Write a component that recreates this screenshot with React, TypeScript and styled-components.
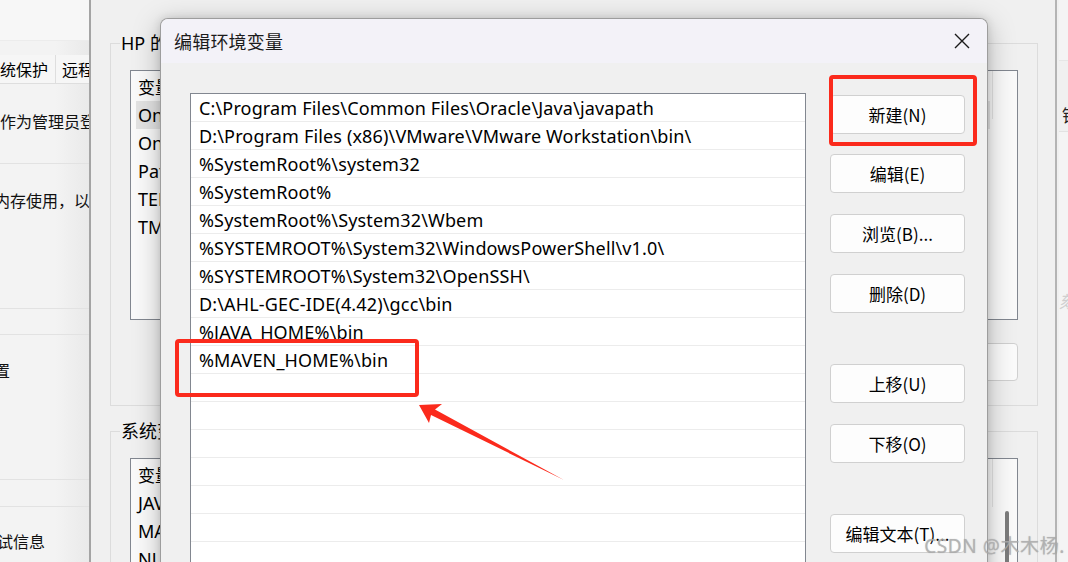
import React from "react";
import styled, { createGlobalStyle } from "styled-components";

const Global = createGlobalStyle`
  html, body { margin: 0; padding: 0; }
  body {
    width: 1068px; height: 562px; overflow: hidden;
    background: #f0f0f0;
    font-family: "Noto Sans", "Noto Sans CJK SC", sans-serif;
    color: #000;
  }
  #root { width: 1068px; height: 562px; }
`;

const Desktop = styled.div`
  position: relative;
  width: 1068px;
  height: 562px;
  overflow: hidden;
  background: #f0f0f0;
`;

/* ---------- left background window ---------- */
const LeftWindow = styled.div`
  position: absolute;
  left: -24px;
  top: 0;
  width: 114px;
  height: 562px;
  display: flex;
  flex-direction: column;
  background: linear-gradient(to right, #f3f3f3 70%, #e9e9e9 100%);
  font-family: "Noto Sans CJK SC", sans-serif;
  font-size: 16px;
  overflow: hidden;
`;

const TopStrip = styled.div`
  flex: none;
  height: 40px;
  background: #f7f7f7;
  border-bottom: 1px solid #ececec;
`;

const TabRow = styled.div`
  flex: none;
  margin-top: 14px;
  height: 28px;
  display: flex;
  border-bottom: 1px solid #dedede;
  background: #f6f6f6;
`;

const Tab = styled.div<{ $pl: number; $pr: number }>`
  padding: 0 ${(p) => p.$pr}px 0 ${(p) => p.$pl}px;
  line-height: 28px;
  white-space: nowrap;
  border-right: 1px solid #dedede;
`;

const LeftBlock = styled.div<{ $h: number; $pt: number }>`
  flex: none;
  height: ${(p) => p.$h}px;
  box-sizing: border-box;
  padding-top: ${(p) => p.$pt}px;
  border-bottom: 1px solid #e2e2e2;
  white-space: nowrap;
  line-height: 22px;
`;

const LeftText = styled.div<{ $shift: number }>`
  margin-left: ${(p) => p.$shift}px;
  color: #111;
`;

/* ---------- middle background window ---------- */
const MidWindow = styled.div`
  position: absolute;
  left: 89px;
  top: 0;
  width: 968px;
  height: 600px;
  box-sizing: border-box;
  background: #f0f0f0;
  border-left: 2px solid #a4a4a4;
  border-right: 2px solid #b4b4b4;
  padding: 31px 17px 0 19px;
  display: flex;
  flex-direction: column;
  font-family: "Noto Sans", "Noto Sans CJK SC", sans-serif;
  font-size: 18px;
`;

const Group = styled.fieldset<{ $mt: number; $pb: number }>`
  flex: none;
  margin: ${(p) => p.$mt}px 0 0 0;
  padding: 15px 19px ${(p) => p.$pb}px 19px;
  border: 1px solid #dcdcdc;
  min-width: 0;
`;

const GroupLegend = styled.legend`
  margin-left: -10px;
  padding: 0 1px;
  line-height: 24px;
  font-family: "Noto Sans", "Noto Sans CJK SC", sans-serif;
  font-size: 18px;
  color: #000;
  white-space: nowrap;
`;

const BgList = styled.div<{ $h: number }>`
  position: relative;
  height: ${(p) => p.$h}px;
  border: 1px solid #828790;
  background: #fafafa;
  display: flex;
  flex-direction: column;
`;

const BgHeader = styled.div`
  height: 30px;
  flex: none;
  display: flex;
  align-items: center;
  padding-left: 7px;
  font-family: "Noto Sans CJK SC", sans-serif;
  font-size: 17px;
  position: relative;
`;

const HeaderSep = styled.span`
  position: absolute;
  left: 861px;
  top: 0;
  height: 48px;
  width: 1px;
  background: #e3e3e3;
`;

const BgRow = styled.div<{ $sel?: boolean }>`
  flex: none;
  height: 28px;
  line-height: 28px;
  margin-left: 5px;
  margin-right: 27px;
  padding-left: 2px;
  background: ${(p) => (p.$sel ? "#e3e3e3" : "transparent")};
  white-space: nowrap;
`;

const BgActions = styled.div`
  display: flex;
  justify-content: flex-end;
  margin-top: 23px;
`;

const BgButton = styled.div`
  width: 135px;
  height: 38px;
  box-sizing: border-box;
  border: 1px solid #d0d0d0;
  border-radius: 4px;
  background: #fbfbfb;
`;

const ScrollThumb = styled.div`
  position: absolute;
  right: 8px;
  top: 52px;
  width: 4px;
  height: 80px;
  border-radius: 2px;
  background: #7c7c7c;
`;

/* ---------- right background window ---------- */
const RightWindow = styled.div`
  position: absolute;
  left: 1059px;
  top: 0;
  width: 60px;
  height: 562px;
  background: #f4f4f4;
  display: flex;
  flex-direction: column;
  font-family: "Noto Sans CJK SC", sans-serif;
  font-size: 17px;
`;

const RightBand = styled.div`
  flex: none;
  margin-top: 60px;
  height: 72px;
  box-sizing: border-box;
  border-top: 1px solid #e6e6e6;
  border-bottom: 1px solid #e2e2e2;
  background: #f0f0f0;
  padding: 44px 0 0 3px;
  line-height: 20px;
  color: #222;
`;

const RightFaint = styled.div`
  margin-top: 156px;
  color: #cfcfcf;
  font-style: italic;
`;

/* ---------- dialog ---------- */
const Dialog = styled.div`
  position: absolute;
  left: 160px;
  top: 18px;
  width: 828px;
  height: 580px;
  box-sizing: border-box;
  border: 1px solid #9d9d9d;
  border-bottom: none;
  border-radius: 8px 8px 0 0;
  background: #f0f0f0;
  box-shadow: 0 6px 28px rgba(0, 0, 0, 0.26), 0 0 8px rgba(0, 0, 0, 0.12);
  display: flex;
  flex-direction: column;
  overflow: hidden;
`;

const TitleBar = styled.div`
  height: 44px;
  flex: none;
  display: flex;
  align-items: center;
  justify-content: space-between;
  padding: 0 16px 0 13px;
  background: #f3f2f8;
`;

const Title = styled.div`
  font-family: "Noto Sans CJK SC", sans-serif;
  font-size: 18px;
  color: #1b1b1b;
  letter-spacing: 0.2px;
`;

const CloseBtn = styled.div`
  width: 18px;
  height: 18px;
  display: flex;
  align-items: center;
  justify-content: center;
`;

const Body = styled.div`
  flex: 1;
  display: flex;
  align-items: flex-start;
  gap: 24px;
  padding: 30px 21px 0 29px;
`;

const PathList = styled.div`
  width: 616px;
  height: 520px;
  box-sizing: border-box;
  border: 1px solid #828790;
  background: #fff;
  display: flex;
  flex-direction: column;
  flex: none;
  overflow: hidden;
`;

const PathRow = styled.div`
  height: 28px;
  flex: none;
  box-sizing: border-box;
  border-bottom: 1px solid #ececec;
  padding: 1px 0 0 8px;
  line-height: 27px;
  font-family: "Noto Sans", "Noto Sans CJK SC", sans-serif;
  font-size: 18px;
  letter-spacing: 0.15px;
  color: #000;
  white-space: nowrap;
  overflow: hidden;
`;

const ButtonColumn = styled.div`
  display: flex;
  flex-direction: column;
  width: 135px;
  padding-top: 2px;
`;

const DlgButton = styled.div<{ $mt: number }>`
  margin-top: ${(p) => p.$mt}px;
  height: 39px;
  box-sizing: border-box;
  border: 1px solid #d0d0d0;
  border-radius: 4px;
  background: #fdfdfd;
  display: flex;
  align-items: center;
  justify-content: center;
  font-family: "Noto Sans CJK SC", sans-serif;
  font-size: 17px;
  color: #000;
  white-space: nowrap;
`;

/* ---------- annotations ---------- */
const RedBox = styled.div<{ $x: number; $y: number; $w: number; $h: number }>`
  position: absolute;
  left: ${(p) => p.$x}px;
  top: ${(p) => p.$y}px;
  width: ${(p) => p.$w}px;
  height: ${(p) => p.$h}px;
  box-sizing: border-box;
  border: 4px solid #fb2a1c;
  border-radius: 4px;
  pointer-events: none;
`;

const Overlay = styled.svg`
  position: absolute;
  left: 0;
  top: 0;
  pointer-events: none;
`;

const Watermark = styled.div`
  position: absolute;
  right: 3px;
  bottom: 3px;
  font-family: "Noto Sans", "Noto Sans CJK SC", sans-serif;
  font-size: 19px;
  color: rgba(175, 175, 175, 0.8);
  text-shadow: 0 0 1px rgba(110, 110, 110, 0.45);
  letter-spacing: 0.6px;
  pointer-events: none;
`;

const paths = [
  "C:\\Program Files\\Common Files\\Oracle\\Java\\javapath",
  "D:\\Program Files (x86)\\VMware\\VMware Workstation\\bin\\",
  "%SystemRoot%\\system32",
  "%SystemRoot%",
  "%SystemRoot%\\System32\\Wbem",
  "%SYSTEMROOT%\\System32\\WindowsPowerShell\\v1.0\\",
  "%SYSTEMROOT%\\System32\\OpenSSH\\",
  "D:\\AHL-GEC-IDE(4.42)\\gcc\\bin",
  "%JAVA_HOME%\\bin",
  "%MAVEN_HOME%\\bin",
];

const rows = [...paths, ...Array(8).fill("")];

const buttons: { label: string; mt: number }[] = [
  { label: "新建(N)", mt: 0 },
  { label: "编辑(E)", mt: 20 },
  { label: "浏览(B)...", mt: 21 },
  { label: "删除(D)", mt: 21 },
  { label: "上移(U)", mt: 51 },
  { label: "下移(O)", mt: 21 },
  { label: "编辑文本(T)...", mt: 51 },
];

export default function App() {
  return (
    <>
      <Global />
      <Desktop>
        <LeftWindow>
          <TopStrip />
          <TabRow>
            <Tab $pl={8} $pr={7}>系统保护</Tab>
            <Tab $pl={6} $pr={8}>远程</Tab>
          </TabRow>
          <LeftBlock $h={80} $pt={26}>
            <LeftText $shift={8}>须作为管理员登录才能进行大多数更改。</LeftText>
          </LeftBlock>
          <LeftBlock $h={145} $pt={25}>
            <LeftText $shift={18}>内存使用，以及虚拟内存</LeftText>
          </LeftBlock>
          <LeftBlock $h={26} $pt={0} />
          <LeftBlock $h={145} $pt={24}>
            <LeftText $shift={18}>置</LeftText>
          </LeftBlock>
          <LeftBlock $h={27} $pt={0} />
          <LeftBlock $h={80} $pt={23}>
            <LeftText $shift={5}>调试信息</LeftText>
          </LeftBlock>
        </LeftWindow>

        <MidWindow>
          <Group $mt={0} $pb={24}>
            <GroupLegend>HP 的用户变量(U)</GroupLegend>
            <BgList $h={248}>
              <BgHeader>
                变量
                <HeaderSep />
              </BgHeader>
              <BgRow $sel>OneDrive</BgRow>
              <BgRow>OneDriveConsumer</BgRow>
              <BgRow>Path</BgRow>
              <BgRow>TEMP</BgRow>
              <BgRow>TMP</BgRow>
            </BgList>
            <BgActions>
              <BgButton />
            </BgActions>
          </Group>
          <Group $mt={13} $pb={24}>
            <GroupLegend>系统变量(S)</GroupLegend>
            <BgList $h={200}>
              <BgHeader>
                变量
                <HeaderSep />
              </BgHeader>
              <BgRow>JAVA_HOME</BgRow>
              <BgRow>MAVEN_HOME</BgRow>
              <BgRow>NUMBER_OF_PROCESSORS</BgRow>
              <ScrollThumb />
            </BgList>
          </Group>
        </MidWindow>

        <RightWindow>
          <RightBand>锁</RightBand>
          <RightFaint>劾</RightFaint>
        </RightWindow>

        <Dialog>
          <TitleBar>
            <Title>编辑环境变量</Title>
            <CloseBtn>
              <svg width="16" height="16" viewBox="0 0 16 16">
                <path d="M1 1 L15 15 M15 1 L1 15" stroke="#1a1a1a" strokeWidth="1.4" fill="none" />
              </svg>
            </CloseBtn>
          </TitleBar>
          <Body>
            <PathList>
              {rows.map((r, i) => (
                <PathRow key={i}>{r}</PathRow>
              ))}
            </PathList>
            <ButtonColumn>
              {buttons.map((b) => (
                <DlgButton key={b.label} $mt={b.mt}>
                  {b.label}
                </DlgButton>
              ))}
            </ButtonColumn>
          </Body>
        </Dialog>

        <RedBox $x={829} $y={75} $w={148} $h={71} />
        <RedBox $x={175} $y={339} $w={244} $h={58} />
        <Overlay width="1068" height="562" viewBox="0 0 1068 562">
          <polygon
            points="419,405 442,404 435,409.5 564,480 431,415 429,423"
            fill="#fb2a1c"
          />
        </Overlay>
        <Watermark>CSDN @木木杨.</Watermark>
      </Desktop>
    </>
  );
}
